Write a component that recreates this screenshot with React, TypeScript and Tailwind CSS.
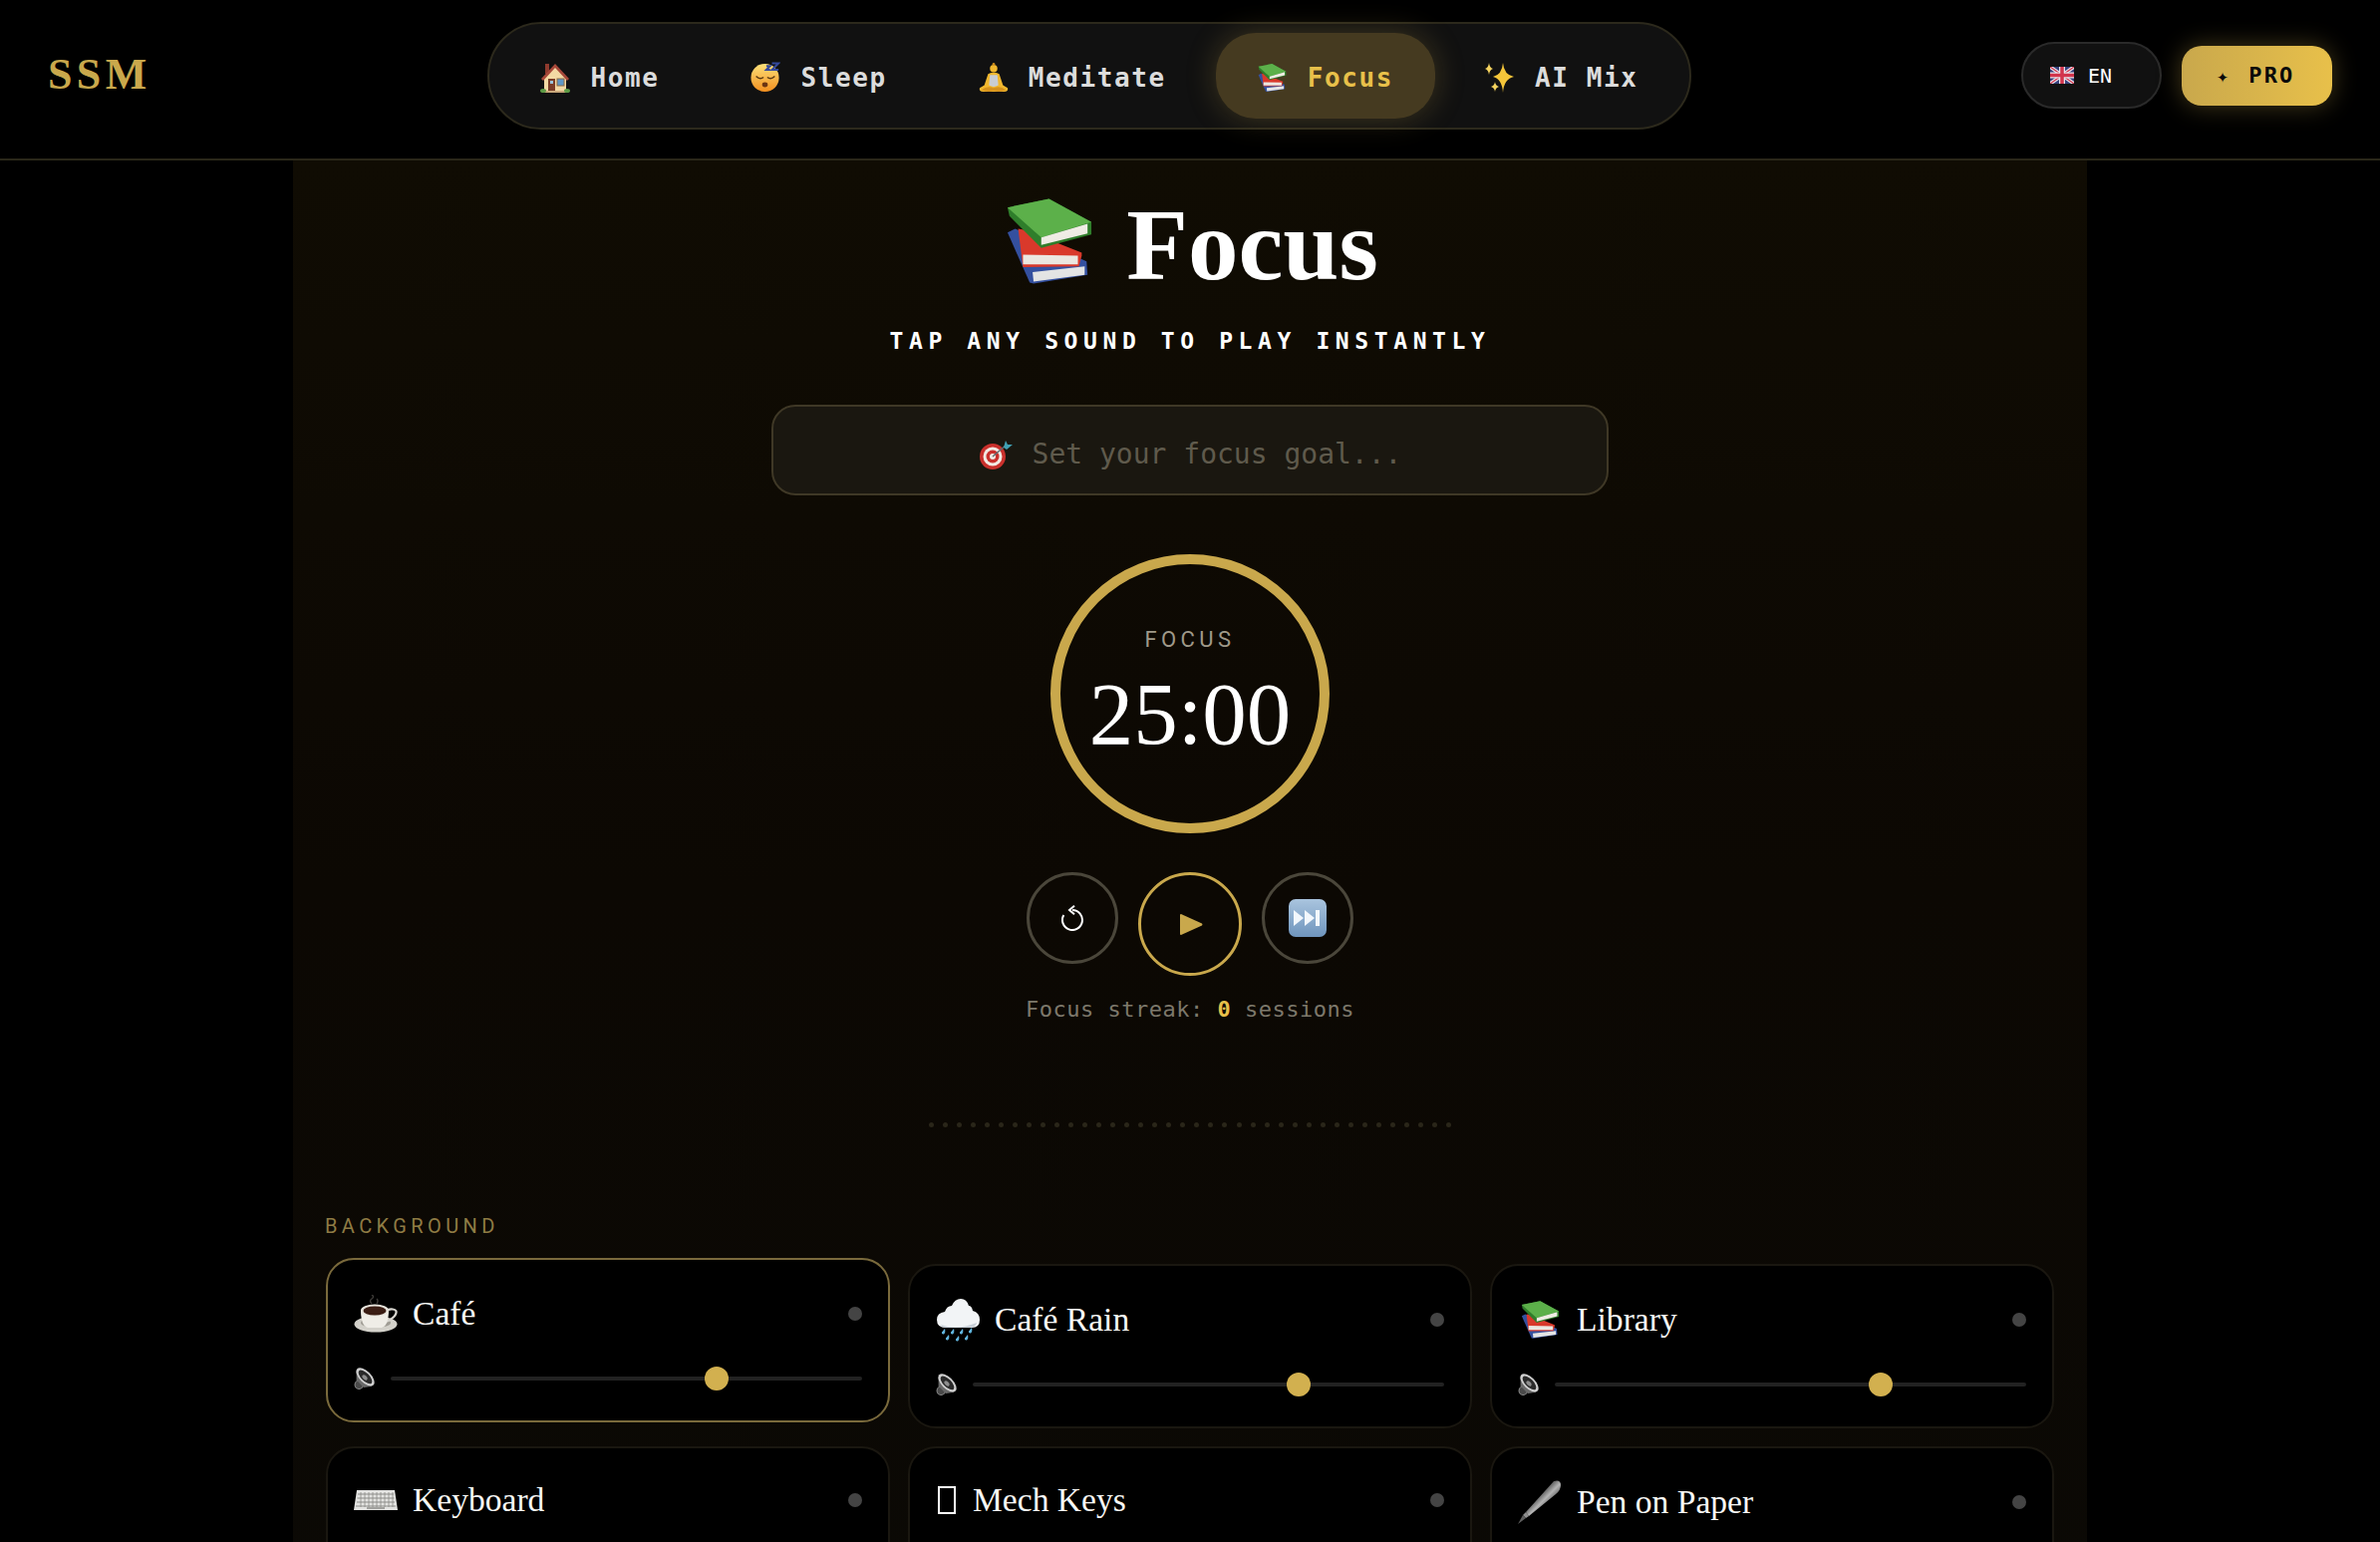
import type { ReactNode } from 'react';

type IconProps = { className: string };

function HouseIcon({ className }: IconProps) {
  return (
    <svg viewBox="0 0 30 32" className={className}>
      <rect x="5" y="2" width="4" height="10" fill="#8f3a2e" />
      <path d="M4 15 15 4l11 11v14H4z" fill="#f3d9a4" />
      <path d="M1 17 15 2l14 15-2 2L15 6 3 19z" fill="#a8493a" />
      <rect x="8" y="17" width="7" height="13" fill="#7a3d28" />
      <rect x="10" y="19" width="3" height="3" fill="#9cc4dc" />
      <rect x="17" y="17" width="7" height="7" fill="#5f97c7" stroke="#8a6a45" />
      <rect x="3" y="29" width="24" height="2" fill="#c9a77a" />
      <ellipse cx="3" cy="29" rx="3" ry="2" fill="#5d9a45" />
      <ellipse cx="27" cy="29" rx="3" ry="2" fill="#5d9a45" />
    </svg>
  );
}

function SleepIcon({ className }: IconProps) {
  return (
    <svg viewBox="0 0 32 32" className={className}>
      <defs>
        <linearGradient id="faceGrad" x1="0" y1="0" x2="0" y2="1">
          <stop offset="0" stopColor="#fde27a" />
          <stop offset="1" stopColor="#f28f1f" />
        </linearGradient>
      </defs>
      <circle cx="15.500" cy="16.500" r="15" fill="url(#faceGrad)" />
      <path d="M6 15q4 4 8 1M18 16q4 3 8-1" stroke="#5a3a12" strokeWidth="1.600" fill="none" />
      <ellipse cx="15.500" cy="24" rx="3" ry="2.600" fill="#6b3412" />
      <path d="M17 4h4l-4 4h4M23 1h7l-7 7h7" stroke="#34489c" strokeWidth="2.200" fill="none" />
    </svg>
  );
}

function MeditateIcon({ className }: IconProps) {
  return (
    <svg viewBox="0 0 32 32" className={className}>
      <circle cx="16" cy="6" r="4" fill="#f1b72e" />
      <rect x="14.500" y="0" width="3" height="3" rx="1.500" fill="#c98a1c" />
      <path d="M10 12q6-3 12 0l4 12 5 3q1 4-4 4H5q-5 0-4-4l5-3z" fill="#f1b72e" />
      <path d="M12 13h8l1 11q-5 3-10 0z" fill="#c9cdd3" />
      <path d="M3 29q6-5 13-2 7-3 13 2-6 3-13 1-7 2-13-1z" fill="#d6921c" />
    </svg>
  );
}

function BooksIcon({ className }: IconProps) {
  return (
    <svg viewBox="8 5 91 92" className={className}>
      <path d="M10 42l8-4 74 34 1 14-56 9-4-1z" fill="#34509f" />
      <path d="M36 83l54-6v9l-53 7z" fill="#e3e4e4" />
      <path d="M21 38l6 1 60 24v3l-3 11-58 1z" fill="#d9392b" />
      <path d="M26 65l57 1v9H26z" fill="#ebe7e1" />
      <path d="M10 16 53 7l44 24v13L45 58 12 25z" fill="#2f7e2b" />
      <path d="M10 16 53 7l44 24-52 16z" fill="#5cb04a" />
      <path d="M45 47l48-14v10L45 55z" fill="#efece4" />
    </svg>
  );
}

function SparklesIcon({ className }: IconProps) {
  return (
    <svg viewBox="0 0 30 30" className={className}>
      <path d="M18 0q1 12 11 14-10 2-11 16-1-14-10-16 9-2 10-14z" fill="#f5c63a" />
      <path d="M4 0q.6 5 4 6-3.400 1-4 6-.6-5-4-6 3.400-1 4-6z" fill="#f5d35f" />
      <path d="M10 19q.5 4 4 5-3.500 1-4 5-.5-4-4-5 3.500-1 4-5z" fill="#f5d35f" />
    </svg>
  );
}

function FlagIcon({ className }: IconProps) {
  return (
    <svg viewBox="0 0 24 17" className={className}>
      <rect width="24" height="17" rx="1.500" fill="#34407c" />
      <path d="M0 0l24 17M24 0 0 17" stroke="#e8e2ea" strokeWidth="3.500" />
      <path d="M0 0l24 17M24 0 0 17" stroke="#d2344c" strokeWidth="1.200" />
      <path d="M12 0v17M0 8.500h24" stroke="#e8e2ea" strokeWidth="6" />
      <path d="M12 0v17M0 8.500h24" stroke="#d2344c" strokeWidth="3.500" />
    </svg>
  );
}

function TargetIcon({ className }: IconProps) {
  return (
    <svg viewBox="0 0 34 30" className={className}>
      <circle cx="14" cy="17" r="13" fill="#c9302c" />
      <circle cx="14" cy="17" r="9.500" fill="#f2e9e2" />
      <circle cx="14" cy="17" r="6.500" fill="#c9302c" />
      <circle cx="14" cy="17" r="3" fill="#f2e9e2" />
      <path d="M14 17 28 5" stroke="#5d6c70" strokeWidth="1.500" />
      <path d="M25 8l2-7 2 4 5 0-6 5z" fill="#3fa0b4" />
    </svg>
  );
}

function CoffeeIcon({ className }: IconProps) {
  return (
    <svg viewBox="0 0 44 38" className={className}>
      <path d="M18 9q-3-3 0-5 3-2 0-4M23 9q2-3 0-5" stroke="#3c3a37" strokeWidth="1.500" fill="none" />
      <ellipse cx="22" cy="29.500" rx="21.500" ry="8" fill="#d3d1ca" />
      <ellipse cx="22" cy="28" rx="15" ry="5" fill="#9f9c94" />
      <path d="M33 17q1-3 6-2.500t3 5-10 7.500" stroke="#d8d6d0" strokeWidth="2.200" fill="none" />
      <path d="M7 15h28q0 16-7 18H14Q7 31 7 15z" fill="#efede7" />
      <ellipse cx="21" cy="15.500" rx="14" ry="6" fill="#e6e3db" />
      <ellipse cx="21" cy="16" rx="11.500" ry="4.500" fill="#3a1d14" />
    </svg>
  );
}

function RainIcon({ className }: IconProps) {
  return (
    <svg viewBox="0 0 43 43" className={className}>
      <path d="M9 29q-9 0-9-8 0-7 8-8 2-6 7-6 3-7 9-7t8 7q3 0 4 5 7 2 7 9 0 8-8 8z" fill="#f2f4f6" />
      <path d="M4 26q16 6 36-2-1 5-8 5H9q-4 0-5-3z" fill="#c9d0d8" />
      {[
        [6, 30],
        [15, 30],
        [24, 30],
        [33, 29],
        [10, 36],
        [20, 37],
        [29, 36],
      ].map(([x, y]) => (
        <path key={`${x}-${y}`} d={`M${x + 2} ${y}q1 4-1 5.500-2.500.5-2-2z`} fill="#62b7e0" />
      ))}
    </svg>
  );
}

function KeyboardIcon({ className }: IconProps) {
  return (
    <svg viewBox="0 0 44 21" className={className}>
      <path d="M3 0h38l3 20H0z" fill="#e4e4e2" />
      <path d="M4 4h36M3.500 8h37M3 12h38M2 16h40" stroke="#8b8b88" strokeWidth="1" />
      <path d="M7 2v15M11 2v15M15 2v15M19 2v15M23 2v15M27 2v15M31 2v15M35 2v15M39 2v15" stroke="#8b8b88" strokeWidth="0.800" />
      <rect x="13" y="17" width="18" height="2" fill="#a3a3a0" />
    </svg>
  );
}

function PenIcon({ className }: IconProps) {
  return (
    <svg viewBox="0 0 44 44" className={className}>
      <defs>
        <linearGradient id="penGrad" x1="0.350" y1="0.350" x2="0.750" y2="0.750">
          <stop offset="0" stopColor="#3a3a3a" />
          <stop offset="0.450" stopColor="#b4b4b4" />
          <stop offset="1" stopColor="#333333" />
        </linearGradient>
      </defs>
      <path d="M36 1q7-2 7 4 0 5-5 9L11 36l-3-4z" fill="url(#penGrad)" />
      <path d="M8 32l3 4-3 2-3-3z" fill="#8f8f8f" />
      <path d="M5 35l3 3-8 6z" fill="#5e5e5e" />
    </svg>
  );
}

function SpeakerIcon({ className }: IconProps) {
  return (
    <svg viewBox="0 0 20 21" className={className}>
      <circle cx="4.500" cy="16.500" r="4" fill="#4a4a4a" stroke="#8a8a8a" />
      <path d="M2 3 17 18l-8 1-7-7z" fill="#6a6a6a" />
      <ellipse cx="10.500" cy="9" rx="11" ry="5.500" transform="rotate(45 10.500 9)" fill="#cfcfcf" />
      <ellipse cx="10.500" cy="9" rx="8.500" ry="3.800" transform="rotate(45 10.500 9)" fill="#2a2a2a" />
      <ellipse cx="10" cy="9.500" rx="3" ry="1.800" transform="rotate(45 10 9.500)" fill="#8d8d8d" />
    </svg>
  );
}

function ReplayIcon() {
  return (
    <svg viewBox="0 0 22 26" className="w-[22px] h-[26px]" fill="none" stroke="#ffffff" strokeWidth="2">
      <path d="M11 5a10 10 0 1 1-8.700 5" />
      <path d="M13 .8 8 5l5 4.200" />
    </svg>
  );
}

function PlayIcon() {
  return (
    <svg viewBox="0 0 23 21" className="w-[23px] h-[21px] ml-[3px]">
      <path d="M1 0 22 9.500q1 1 0 2L1 21q-1 0-1-1V1q0-1 1-1z" fill="#c9a84c" />
    </svg>
  );
}

function SkipIcon() {
  return (
    <svg viewBox="0 0 38 38" className="w-[38px] h-[38px]">
      <defs>
        <linearGradient id="skipGrad" x1="0" y1="0" x2="0" y2="1">
          <stop offset="0" stopColor="#a9c4de" />
          <stop offset="1" stopColor="#6f95bd" />
        </linearGradient>
      </defs>
      <rect width="38" height="38" rx="7" fill="url(#skipGrad)" />
      <path d="M5 11l10 8-10 8zM16 11l10 8-10 8z" fill="#f2f7fc" />
      <rect x="27" y="11" width="4" height="16" fill="#f2f7fc" />
    </svg>
  );
}

type NavItem = { label: string; icon: ReactNode; active?: boolean };

const navItems: NavItem[] = [
  { label: 'Home', icon: <HouseIcon className="w-[30px] h-[32px]" /> },
  { label: 'Sleep', icon: <SleepIcon className="w-[31px] h-[31px]" /> },
  { label: 'Meditate', icon: <MeditateIcon className="w-[30px] h-[30px]" /> },
  { label: 'Focus', icon: <BooksIcon className="w-[29px] h-[30px]" />, active: true },
  { label: 'AI Mix', icon: <SparklesIcon className="w-[30px] h-[30px]" /> },
];

type Sound = { name: string; icon: ReactNode; head: string; iconBox: string; active?: boolean };

const sounds: Sound[] = [
  { name: 'Café', icon: <CoffeeIcon className="w-[44px] h-[38px]" />, head: 'h-[56px]', iconBox: 'w-[44px]', active: true },
  { name: 'Café Rain', icon: <RainIcon className="w-[43px] h-[43px]" />, head: 'h-[56px]', iconBox: 'w-[44px]' },
  { name: 'Library', icon: <BooksIcon className="w-[39px] h-[40px]" />, head: 'h-[56px]', iconBox: 'w-[44px]' },
  { name: 'Keyboard', icon: <KeyboardIcon className="w-[44px] h-[21px]" />, head: 'h-[52px]', iconBox: 'w-[44px]' },
  { name: 'Mech Keys', icon: <div className="w-[18px] h-[28px] border-2 border-white" />, head: 'h-[52px]', iconBox: 'w-[22px]' },
  { name: 'Pen on Paper', icon: <PenIcon className="w-[44px] h-[44px]" />, head: 'h-[56px]', iconBox: 'w-[44px]' },
];

function SoundCard({ sound }: { sound: Sound }) {
  return (
    <div
      className={`rounded-[28px] border-2 bg-black px-[26px] pt-[26px] pb-[30px] ${
        sound.active ? 'border-[#7a6a3c] -translate-y-1.5' : 'border-[#1a1710]'
      }`}
    >
      <div className={`flex items-center ${sound.head}`}>
        <div className={`flex justify-center ${sound.iconBox}`}>{sound.icon}</div>
        <span className="ml-[15px] flex-1 font-['Liberation_Serif',serif] text-[33.6px] leading-none text-[#f7f7f5]">{sound.name}</span>
        <div className="w-[14px] h-[14px] rounded-full bg-[#444444]" />
      </div>
      <div className="mt-[25px] flex items-center gap-[15px] h-[24px]">
        <SpeakerIcon className="w-[22px] h-[22px]" />
        <div className="relative flex-1 h-[4px] rounded-full bg-[#222222]">
          <div className="absolute left-[315px] top-[-10px] w-[24px] h-[24px] rounded-full bg-[#d2b04f]" />
        </div>
      </div>
    </div>
  );
}

export default function App() {
  return (
    <div className="h-[1547px] overflow-hidden bg-black font-['DejaVu_Sans_Mono',monospace] text-white">
      <header className="flex h-[161px] items-start justify-between border-b-2 border-[#2a2719] px-[48px] pt-[22px]">
        <div className="mt-[31px] w-[110px] font-['Liberation_Serif',serif] text-[44px] font-bold leading-none tracking-[0.1em] text-[#c9a84c]">SSM</div>
        <nav className="flex gap-2 rounded-[54px] border-2 border-[#2c291c] bg-[#111111] px-[9px] py-[9px]">
          {navItems.map((item) => (
            <a
              key={item.label}
              className={`flex h-[86px] items-center gap-[20px] rounded-[40px] px-[42px] text-[26px] font-bold tracking-[1.6px] ${
                item.active ? 'bg-[#453a20] text-[#e8c04a] shadow-[0_0_30px_rgba(201,168,76,0.25)]' : 'text-[#dcdcdc]'
              }`}
            >
              <span className="mt-[3px] flex w-[30px] justify-center">{item.icon}</span>
              <span className="mt-[4px]">{item.label}</span>
            </a>
          ))}
        </nav>
        <div className="flex items-center gap-[20px] pt-[20px]">
          <button className="flex h-[67px] w-[141px] items-center gap-[14px] rounded-[34px] border-2 border-[#2a2a2a] bg-[#111111] pl-[27px] text-[20px] text-white">
            <FlagIcon className="w-[24px] h-[17px]" />
            EN
          </button>
          <button className="flex h-[60px] w-[151px] items-center gap-[18px] rounded-[20px] bg-gradient-to-r from-[#c9a84c] to-[#e8c04a] pl-[35px] text-[22px] font-bold tracking-[0.1em] text-[#0a0a0a] shadow-[0_0_24px_rgba(201,168,76,0.35)]">
            <span className="text-[20px]">✦</span>
            PRO
          </button>
        </div>
      </header>

      <main className="mx-auto flex min-h-[1386px] w-[1800px] flex-col items-center bg-gradient-to-b from-[#100c03] via-[#0c0803] to-[#0b0905] px-[33px] pt-[33px]">
        <h1 className="ml-[4px] flex h-[104px] items-center gap-[33px] font-['Liberation_Serif',serif] text-[101px] font-bold leading-none text-white">
          <BooksIcon className="mb-[8px] w-[88px] h-[90px]" />
          Focus
        </h1>
        <p className="mt-[33px] text-[23px] font-bold leading-[22px] tracking-[5.6px] text-white">TAP ANY SOUND TO PLAY INSTANTLY</p>

        <div className="mt-[53px] flex h-[91px] w-[840px] shrink-0 items-center justify-center gap-[20px] rounded-[24px] border-2 border-[#3f3826] bg-[#1a1710] pt-[8px] text-[28px] text-[#5f5a4c]">
          <TargetIcon className="w-[34px] h-[30px]" />
          <span>Set your focus goal...</span>
        </div>

        <div className="mt-[59px] flex h-[280px] w-[280px] shrink-0 flex-col items-center rounded-full border-[10px] border-[#c9a84c] pt-[65px]">
          <span className="font-['Roboto',sans-serif] text-[22px] font-normal leading-[22px] tracking-[0.2em] text-[#a09a8a]">FOCUS</span>
          <span className="mt-[19px] font-['Liberation_Serif',serif] text-[89px] leading-[89px] text-white">25:00</span>
        </div>

        <div className="mt-[39px] flex items-start gap-[20px]">
          <button className="flex h-[92px] w-[92px] items-center justify-center rounded-full border-[3px] border-[#4a463a]">
            <ReplayIcon />
          </button>
          <button className="flex h-[104px] w-[104px] items-center justify-center rounded-full border-[3px] border-[#c9a84c]">
            <PlayIcon />
          </button>
          <button className="flex h-[92px] w-[92px] items-center justify-center rounded-full border-[3px] border-[#4a463a]">
            <SkipIcon />
          </button>
        </div>

        <p className="mt-[21px] text-[22px] leading-[26px] tracking-[0.5px] text-[#7d786b]">
          Focus streak: <span className="font-bold text-[#e8c04a]">0</span> sessions
        </p>

        <div className="mt-[100px] flex w-[525px] justify-between">
          {Array.from({ length: 38 }).map((_, i) => (
            <span key={i} className="h-[5px] w-[5px] rounded-full bg-[#2a2619]" />
          ))}
        </div>

        <div className="mt-[89px] w-full">
          <h2 className="-ml-[1px] font-['Roboto',sans-serif] text-[20px] font-normal leading-[20px] tracking-[0.22em] text-[#8f7c44]">BACKGROUND</h2>
          <div className="mt-[28px] grid grid-cols-3 gap-[18px]">
            {sounds.map((sound) => (
              <SoundCard key={sound.name} sound={sound} />
            ))}
          </div>
        </div>
      </main>
    </div>
  );
}
